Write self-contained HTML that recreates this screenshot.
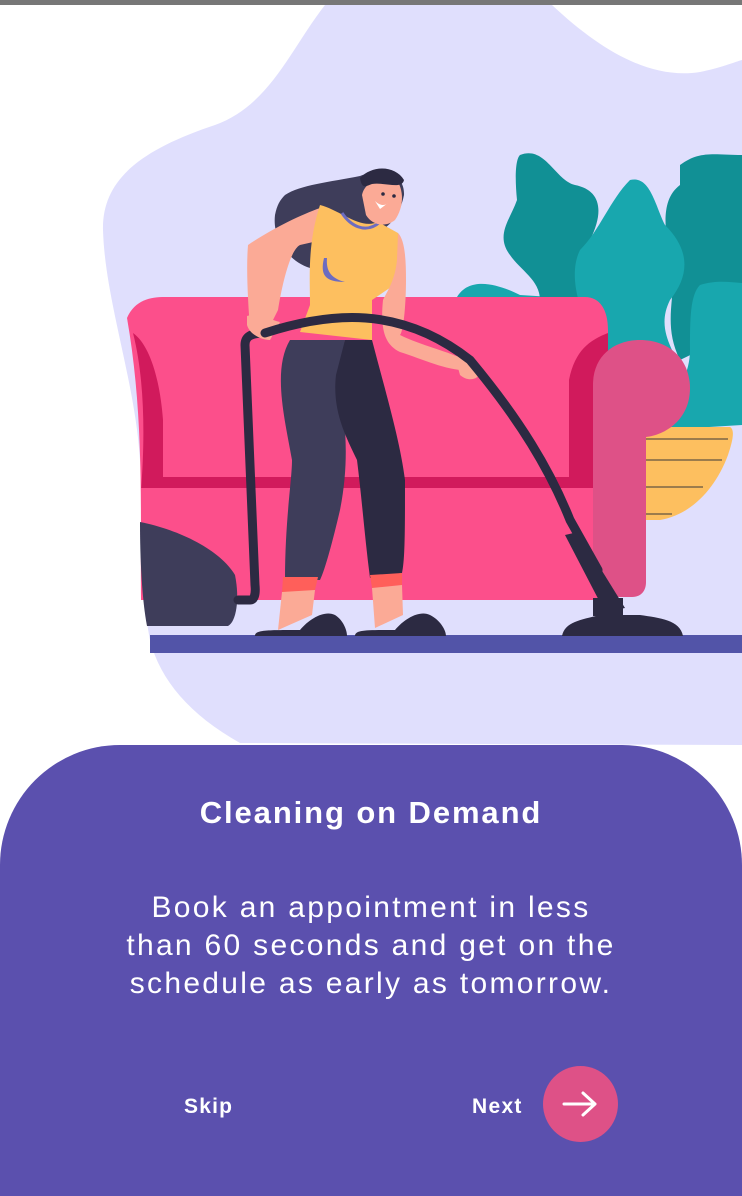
<!DOCTYPE html>
<html><head><meta charset="utf-8"><style>
html,body{margin:0;padding:0;background:#fff;}
body{width:742px;height:1196px;position:relative;overflow:hidden;font-family:"Liberation Sans",sans-serif;}
.bar{position:absolute;left:0;top:0;width:742px;height:5px;background:#777;}
svg.ill{position:absolute;left:0;top:0;}
.panel{position:absolute;left:0;top:745px;width:742px;height:451px;background:#5b50ae;border-radius:120px 120px 0 0;}
.t{position:absolute;left:0;width:742px;text-align:center;color:#fff;}
.title{top:795px;font-size:31px;font-weight:bold;letter-spacing:1.9px;}
.body{top:889px;font-size:30px;line-height:38px;font-weight:normal;letter-spacing:2.3px;}
.skip{position:absolute;left:184px;top:1095px;font-size:21px;font-weight:bold;color:#fff;letter-spacing:1.2px;}
.next{position:absolute;left:472px;top:1095px;font-size:21px;font-weight:bold;color:#fff;letter-spacing:1.3px;}
.btn{position:absolute;left:543px;top:1066px;width:75px;height:76px;border-radius:50%;background:#de5187;}
</style></head><body>
<svg class="ill" width="742" height="760" viewBox="0 0 742 760">
<path d="M325 5 L552 5 C600 50 650 80 700 72 C720 68 735 62 742 60 L742 745 L240 743 C190 715 160 680 150 640 C140 590 145 520 140 460 C135 380 105 300 103 230 C102 180 140 150 215 125 C270 105 290 50 325 5Z" fill="#e0dffd"/>
<path d="M457 297 C470 275 500 285 520 295 L600 300 L600 297Z" fill="#18a7ae"/>
<path d="M520 155 C545 145 555 180 575 185 C600 190 605 210 590 240 C585 260 600 280 605 300 L540 300 C540 280 520 270 510 255 C495 235 510 220 517 200 C515 180 515 160 520 155Z" fill="#119095"/>
<path d="M680 165 C700 150 715 155 742 155 L742 330 L680 360 C660 320 680 290 670 260 C665 230 660 200 680 185Z" fill="#119095"/>
<path d="M630 180 C650 175 655 205 665 225 C690 250 690 275 670 300 C655 330 675 350 680 370 L600 380 L590 330 C575 300 570 270 580 250 C600 230 610 200 630 180Z" fill="#18a7ae"/>
<path d="M700 285 C715 280 730 282 742 283 L742 425 L660 430 C670 400 690 380 690 350 C690 320 690 295 700 285Z" fill="#18a7ae"/>
<path d="M640 427 L730 427 C735 430 733 440 728 455 C715 490 690 515 660 520 L640 520Z" fill="#fdbf5f"/>
<g stroke="#3a3a3a" stroke-width="1"><line x1="645" y1="439" x2="728" y2="439"/><line x1="645" y1="460" x2="722" y2="460"/><line x1="645" y1="487" x2="703" y2="487"/><line x1="645" y1="514" x2="672" y2="514"/></g>
<path d="M127 318 C135 300 150 297 165 297 L585 297 C600 297 608 310 608 330 L608 600 L141 600 C140 520 145 420 127 318Z" fill="#fc4f8b"/>
<path d="M133 333 C150 345 160 380 163 420 L163 477 L569 477 L569 380 C575 350 590 340 608 333 L608 490 L141 490 C145 440 145 380 133 333Z" fill="#d11a5c"/>
<rect x="141" y="488" width="467" height="110" fill="#fc4f8b"/>
<path d="M593 385 C593 355 615 340 640 340 C670 340 690 360 690 388 C690 420 665 435 646 437 L646 582 C646 592 640 597 632 597 L605 597 C597 597 593 590 593 582Z" fill="#de5187"/>
<rect x="150" y="635" width="592" height="18" fill="#5254a8"/>
<path d="M140 522 C180 530 220 550 235 575 C240 600 236 622 228 626 L147 626 C142 600 140 560 140 522Z" fill="#3e3d5a"/>
<path d="M238 600 L250 600 C254 600 256 595 255 585 L245 345 C245 337 250 333 265 333" fill="none" stroke="#2c2a42" stroke-width="9" stroke-linecap="round"/>
<path d="M290 340 L345 340 L340 385 C345 420 350 460 340 510 C333 540 325 570 320 580 L285 580 C285 520 292 480 292 460 C285 420 272 370 290 340Z" fill="#3e3d5a"/>
<path d="M345 340 L372 340 C385 390 400 440 405 480 C405 530 405 560 402 573 L370 578 C365 540 362 500 357 460 C345 435 332 410 336 375Z" fill="#2c2a42"/>
<path d="M283 577 L318 577 L315 590 L282 593Z" fill="#ff5f5a"/>
<path d="M370 575 L402 573 L402 585 L372 588Z" fill="#ff5f5a"/>
<path d="M282 592 L315 590 L312 615 L278 630Z" fill="#fbaa96"/>
<path d="M372 588 L402 585 L403 615 L375 628Z" fill="#fbaa96"/>
<path d="M255 636 C255 630 265 630 300 630 C310 618 325 610 335 615 C343 620 347 630 347 636Z" fill="#2c2a42"/>
<path d="M355 636 C355 630 365 630 395 630 C405 618 420 610 430 615 C440 620 446 630 446 636Z" fill="#2c2a42"/>
<path d="M285 195 C300 185 330 182 360 176 C385 166 405 175 404 195 C400 215 390 225 382 230 L330 255 L310 268 C290 262 272 240 275 215 C277 205 280 200 285 195Z" fill="#3e3d5a"/>
<path d="M248 245 C270 230 300 215 320 208 L322 240 L300 245 C290 250 282 285 278 310 L268 330 L250 330 C248 300 246 270 248 245Z" fill="#fbaa96"/>
<path d="M247 316 C260 312 270 320 280 322 L270 340 C262 340 250 335 247 325Z" fill="#fbaa96"/>
<path d="M320 205 C340 210 360 230 378 222 L398 233 C405 245 400 270 397 283 L372 300 L372 340 L300 332 L310 305 C310 280 307 245 320 205Z" fill="#fdbf5f"/>
<path d="M342 213 C350 225 365 235 380 222" fill="none" stroke="#6d6cc0" stroke-width="3"/>
<path d="M324 258 C320 275 325 282 345 282 C330 278 326 270 327 258Z" fill="#6d6cc0"/>
<path d="M398 233 C405 240 406 260 406 280 C406 300 404 330 400 335 C420 345 450 352 465 360 L470 370 C450 372 425 360 400 352 C385 345 380 330 383 300 C388 290 395 280 397 260Z" fill="#fbaa96"/>
<path d="M455 357 C465 352 478 360 481 372 C478 380 468 382 460 375Z" fill="#fbaa96"/>
<path d="M362 195 C365 180 385 175 398 182 C405 195 402 210 395 220 C385 228 372 225 366 215Z" fill="#fbaa96"/>
<path d="M360 178 C372 165 395 165 404 180 C402 190 385 182 372 184 C366 186 362 190 360 178Z" fill="#2c2a42"/>
<circle cx="383" cy="194" r="1.8" fill="#2c2a42"/><circle cx="394" cy="196" r="1.8" fill="#2c2a42"/>
<path d="M375 201 C380 206 385 206 388 203 L380 209Z" fill="#fff"/>
<path d="M265 333 C330 312 400 305 470 360 C520 420 550 470 570 520 L598 570" fill="none" stroke="#2c2a42" stroke-width="9" stroke-linecap="round"/>
<path d="M565 535 L578 532 L625 608 L605 612Z" fill="#2c2a42"/>
<rect x="593" y="598" width="30" height="18" fill="#2c2a42"/>
<path d="M562 636 C565 622 580 620 600 615 L640 615 C660 618 680 620 683 636Z" fill="#2c2a42"/>
</svg>
<div class="bar"></div>
<div class="panel"></div>
<div class="t title">Cleaning on Demand</div>
<div class="t body">Book an appointment in less<br>than 60 seconds and get on the<br>schedule as early as tomorrow.</div>
<div class="skip">Skip</div>
<div class="next">Next</div>
<div class="btn"><svg width="75" height="76" viewBox="0 0 75 76"><path d="M21 38 H52 M40 27 L52 38 L40 49" fill="none" stroke="#fff" stroke-width="3" stroke-linecap="round" stroke-linejoin="round"/></svg></div>
</body></html>
